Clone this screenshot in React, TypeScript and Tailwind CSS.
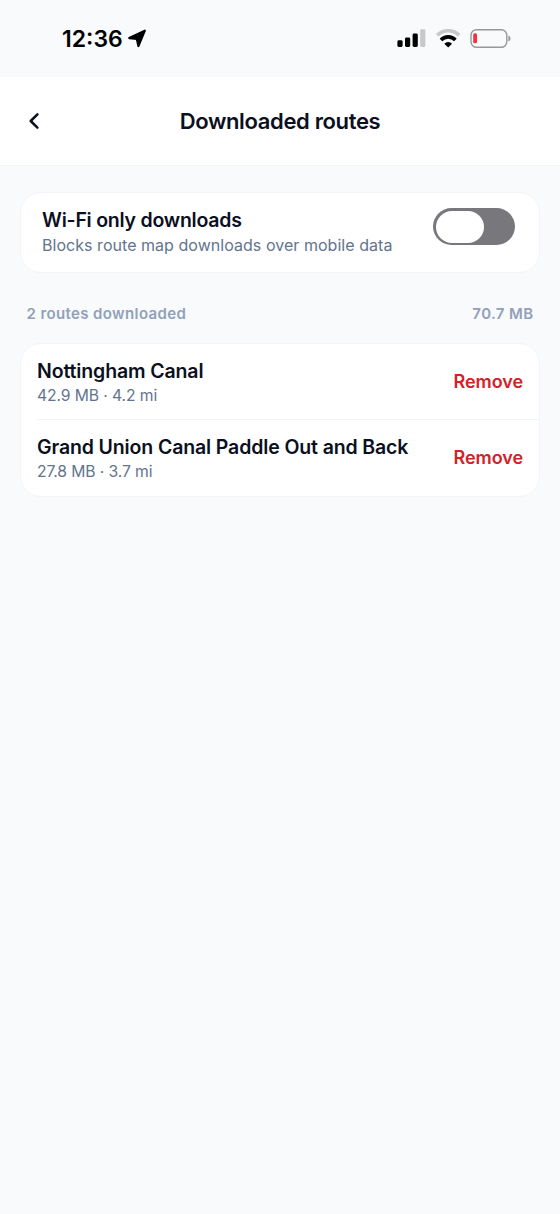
interface DownloadedRoute {
  name: string;
  details: string;
}

const routes: DownloadedRoute[] = [
  { name: 'Nottingham Canal', details: '42.9 MB · 4.2 mi' },
  { name: 'Grand Union Canal Paddle Out and Back', details: '27.8 MB · 3.7 mi' },
];

function StatusBar(): JSX.Element {
  return (
    <div className="flex h-[77px] items-center justify-between pl-[62px] pr-12">
      <div className="flex items-center gap-[5px] text-black">
        <span className="whitespace-nowrap text-[23px] leading-7 font-semibold">12:36</span>
        <svg width="19" height="19" viewBox="0 0 19 19" fill="currentColor">
          <path
            d="M1.3 9.1 16.8 1.7 10.4 17 8.8 9.8Z"
            stroke="currentColor"
            strokeWidth="2.2"
            strokeLinejoin="round"
          />
        </svg>
      </div>
      <div className="flex items-center">
        <svg width="29" height="20" viewBox="0 0 29 20">
          <rect x="0.4" y="11.3" width="5.2" height="6.7" rx="1.4" />
          <rect x="8" y="8.5" width="5.2" height="9.5" rx="1.4" />
          <rect x="15.6" y="4.5" width="5.2" height="13.5" rx="1.4" />
          <rect x="23.2" y="0.2" width="5.2" height="17.8" rx="1.4" fill="#c7c8ca" />
        </svg>
        <svg className="ml-[10px]" width="25" height="20" viewBox="0 0 25 20" fill="none">
          <path d="M1.2 6.2a15.8 15.8 0 0 1 22 0" stroke="#c7c8ca" strokeWidth="3.6" />
          <path d="M5 10.9a10 10 0 0 1 14.4 0" stroke="#000" strokeWidth="3.6" />
          <path d="M12.2 18.6 8.3 14.7a5.6 5.6 0 0 1 7.8 0Z" fill="#000" />
        </svg>
        <svg className="ml-[9px]" width="42" height="20" viewBox="0 0 42 20" fill="none">
          <rect x="1" y=".7" width="35.8" height="17.6" rx="5.6" stroke="#97989b" strokeWidth="1.4" />
          <path d="M38.4 6.5c2.8.8 2.8 5.2 0 6Z" fill="#97989b" />
          <rect x="3.2" y="4.3" width="3.8" height="10" rx="1.5" fill="#f7323f" />
        </svg>
      </div>
    </div>
  );
}

function Header(): JSX.Element {
  return (
    <header className="grid h-[89px] grid-cols-[68px_1fr_68px] items-center border-b border-slate-100 bg-white">
      <button type="button" aria-label="Back" className="flex justify-center">
        <svg width="12" height="18" viewBox="0 0 12 18" fill="none">
          <path d="m9.4 2.3-6.7 6.7 6.7 6.7" stroke="#0b0f1e" strokeWidth="2.5" strokeLinecap="round" strokeLinejoin="round" />
        </svg>
      </button>
      <h1 className="whitespace-nowrap text-center text-[22px] leading-7 font-semibold tracking-[-0.35px]">
        Downloaded routes
      </h1>
    </header>
  );
}

function WifiSetting(): JSX.Element {
  return (
    <section className="flex h-[81px] justify-between rounded-[21px] border border-slate-100 bg-white pt-[13px] pr-6 pl-[21px]">
      <div className="whitespace-nowrap">
        <h2 className="text-[19.5px] leading-7 font-semibold tracking-[-0.23px]">Wi-Fi only downloads</h2>
        <p className="text-[16px] leading-[22px] tracking-[0.04px] text-slate-500">
          Blocks route map downloads over mobile data
        </p>
      </div>
      <button
        type="button"
        role="switch"
        aria-checked={false}
        aria-label="Wi-Fi only downloads"
        className="mt-0.5 h-[37px] w-[82px] rounded-full bg-[#78777c] p-[2.5px]"
      >
        <span className="block h-8 w-[48.5px] rounded-full bg-white" />
      </button>
    </section>
  );
}

function RouteRow({ name, details }: DownloadedRoute): JSX.Element {
  return (
    <li className="flex h-[76px] items-center justify-between pr-4">
      <div className="pt-px whitespace-nowrap">
        <h3 className="text-[19.5px] leading-[26px] font-semibold tracking-[-0.13px]">{name}</h3>
        <p className="text-[15.7px] leading-[23px] tracking-[-0.1px] text-slate-500">{details}</p>
      </div>
      <button type="button" className="text-[18px] leading-6 font-semibold tracking-[-0.07px] text-[#d32128]">
        Remove
      </button>
    </li>
  );
}

export default function App(): JSX.Element {
  return (
    <div className="min-h-screen bg-slate-50 font-['Inter',sans-serif] text-[#0b0f1e]">
      <StatusBar />
      <Header />
      <main className="px-5 pt-[26px]">
        <WifiSetting />
        <div className="flex h-[70px] items-center justify-between px-[6.5px] pt-3 pb-[1px] text-[15px] leading-6 font-semibold tracking-[0.38px] text-slate-400">
          <span>2 routes downloaded</span>
          <span>70.7 MB</span>
        </div>
        <ul className="divide-y divide-slate-100 rounded-[21px] border border-slate-100 bg-white pl-4">
          {routes.map((route) => (
            <RouteRow key={route.name} {...route} />
          ))}
        </ul>
      </main>
    </div>
  );
}
